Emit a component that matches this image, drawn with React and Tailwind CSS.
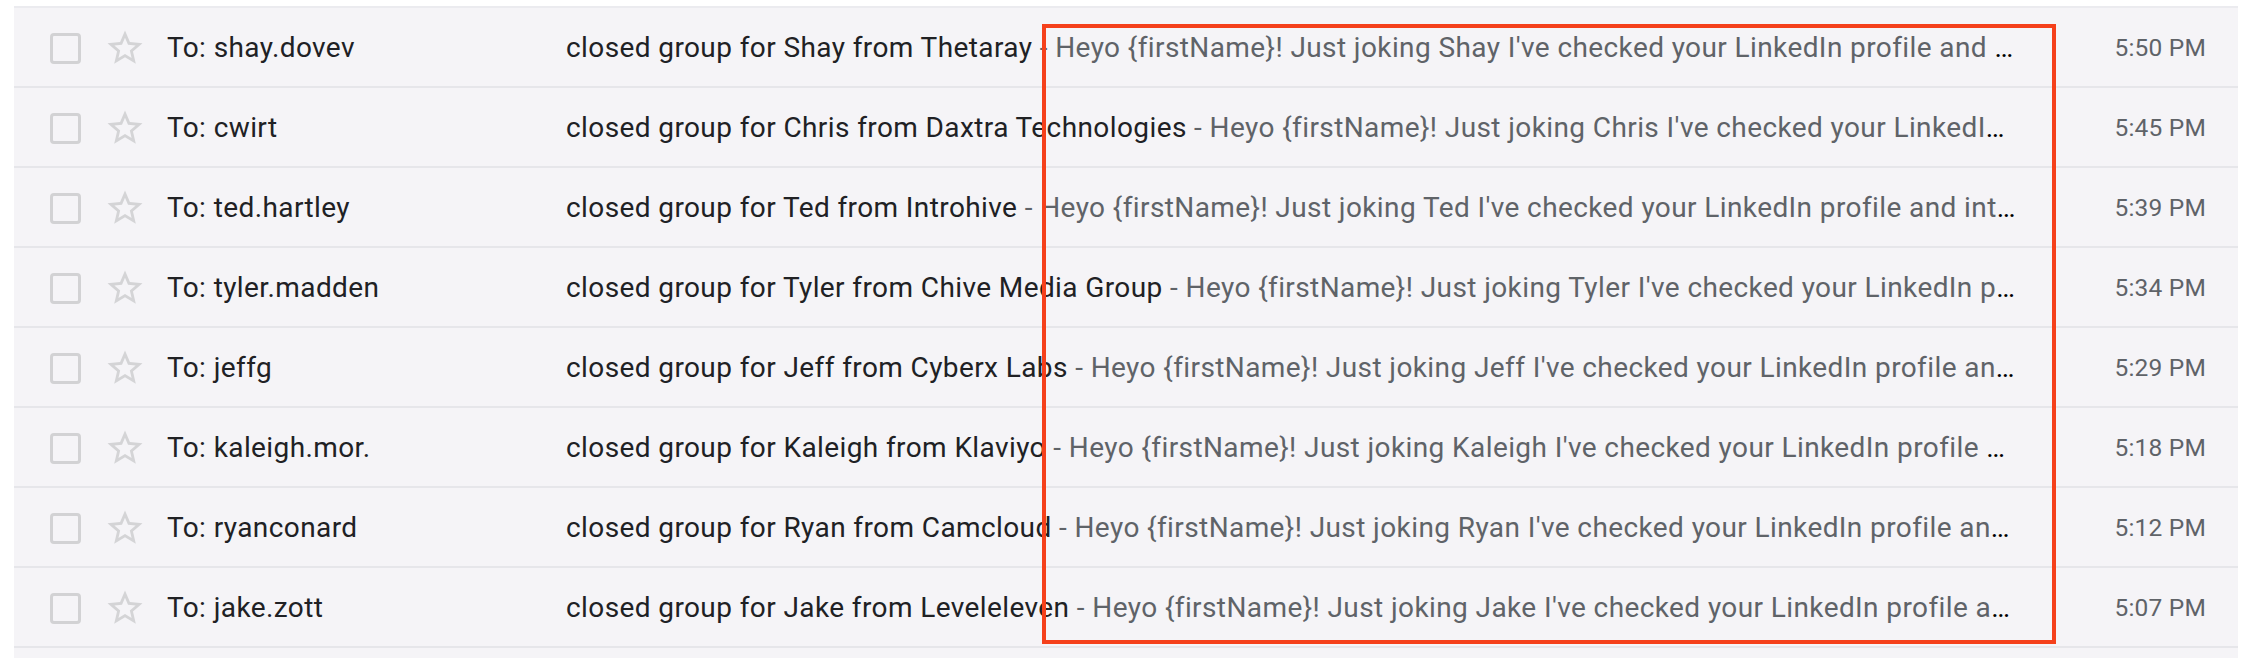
import React from "react";

const rows = [
  { to: "shay.dovev", name: "Shay", company: "Thetaray", time: "5:50 PM" },
  { to: "cwirt", name: "Chris", company: "Daxtra Technologies", time: "5:45 PM" },
  { to: "ted.hartley", name: "Ted", company: "Introhive", time: "5:39 PM" },
  { to: "tyler.madden", name: "Tyler", company: "Chive Media Group", time: "5:34 PM" },
  { to: "jeffg", name: "Jeff", company: "Cyberx Labs", time: "5:29 PM" },
  { to: "kaleigh.mor.", name: "Kaleigh", company: "Klaviyo", time: "5:18 PM" },
  { to: "ryanconard", name: "Ryan", company: "Camcloud", time: "5:12 PM" },
  { to: "jake.zott", name: "Jake", company: "Leveleleven", time: "5:07 PM" },
];

function Star() {
  return (
    <svg viewBox="0 0 24 24" className="w-[42px] h-[42px] shrink-0 ml-[23px]" fill="#d4d4d6">
      <path d="M22 9.24l-7.19-.62L12 2 9.19 8.63 2 9.24l5.46 4.73L5.82 21 12 17.27 18.18 21l-1.63-7.03L22 9.24zM12 15.4l-3.76 2.27 1-4.28-3.32-2.88 4.38-.38L12 6.1l1.71 4.04 4.38.38-3.32 2.88 1 4.28L12 15.4z" />
    </svg>
  );
}

export default function App() {
  return (
    <div className="relative w-[2248px] h-[658px] overflow-hidden bg-white pt-[6px] pl-[14px] pr-[10px] font-['Roboto','Noto_Sans',sans-serif] tracking-[0.4px]">
      <div className="h-full bg-[#f5f4f7] border-t-2 border-[#ebebef]">
        {rows.map((r) => (
          <div
            key={r.to}
            className="flex items-center h-[80px] border-b-2 border-[#e6e6ea] pl-[36px] pr-[32px] pt-[2px]"
          >
            <div className="w-[31px] h-[31px] shrink-0 rounded-[4px] border-[3px] border-[#d2d2d4]" />
            <Star />
            <div className="ml-[21px] w-[399px] shrink-0 truncate text-[28px] text-[#202124]">
              To: {r.to}
            </div>
            <div className="flex-1 min-w-0 truncate text-[28px]">
              <span className="text-[#202124]">
                closed group for {r.name} from {r.company}
              </span>
              <span className="text-[#5f6368]">
                {" "}- Heyo {"{firstName}"}! Just joking {r.name} I've checked your LinkedIn profile and interesting background
              </span>
            </div>
            <div className="w-[189px] shrink-0 text-right text-[24.5px] text-[#5f6368] tracking-[0.2px]">
              {r.time}
            </div>
          </div>
        ))}
      </div>
      <div className="absolute left-[1042px] top-[24px] w-[1014px] h-[620px] border-4 border-[#f5401b]" />
    </div>
  );
}
